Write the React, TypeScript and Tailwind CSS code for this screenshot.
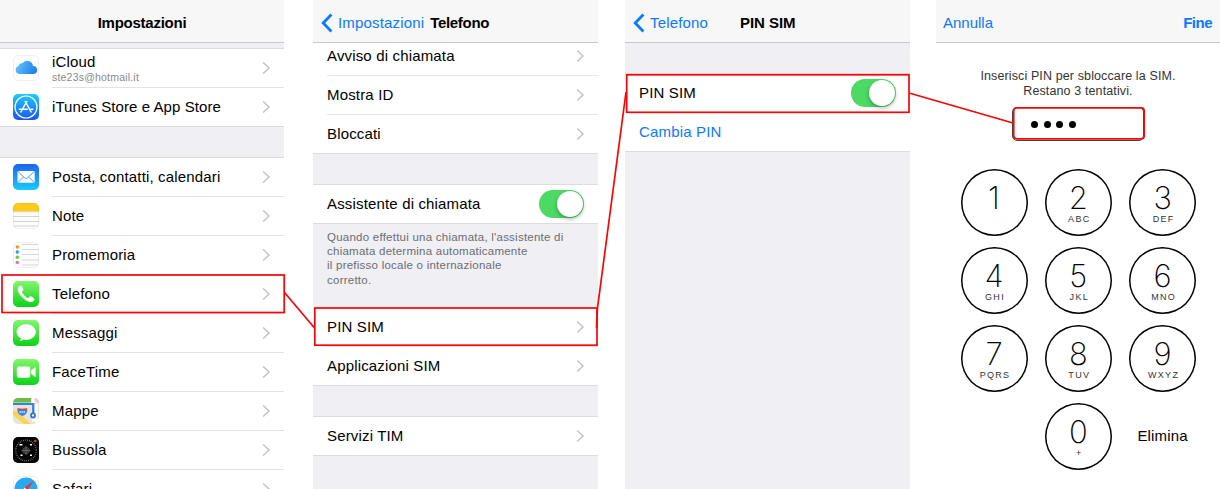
import type { ReactNode } from "react";

function Chevron() {
  return (
    <svg width="9" height="14" viewBox="0 0 9 14" fill="none" className="mr-[13px] shrink-0">
      <path d="M1.2 1.5 7 7l-5.8 5.5" stroke="#c3c3c8" strokeWidth="1.5" />
    </svg>
  );
}

function BackArrow() {
  return (
    <svg width="12" height="20" viewBox="0 0 12 20" fill="none" className="shrink-0">
      <path d="M10.4 1.6 2.2 10l8.2 8.4" stroke="#0a7aff" strokeWidth="2.8" />
    </svg>
  );
}

function Toggle() {
  return (
    <div className="mr-[14px] flex h-[28px] w-[45px] shrink-0 justify-end rounded-full bg-[#4cd964] p-[1px]">
      <div className="size-[26px] rounded-full bg-white shadow-[0_2px_4px_rgba(0,0,0,0.3)]" />
    </div>
  );
}

function AppIcon({ children }: { children: ReactNode }) {
  return (
    <svg width="26" height="26" viewBox="0 0 26 26" className="shrink-0 overflow-hidden rounded-[5px]">
      {children}
    </svg>
  );
}

const green = (id: string) => (
  <>
    <linearGradient id={id} x2="0" y2="1">
      <stop stopColor="#84f66d" />
      <stop offset="1" stopColor="#0bd318" />
    </linearGradient>
    <rect width="26" height="26" fill={`url(#${id})`} />
  </>
);

const icons: Record<string, ReactNode> = {
  icloud: (
    <>
      <linearGradient id="cloud" x2="1" y2="0.3">
        <stop stopColor="#68c7fb" />
        <stop offset="1" stopColor="#2684ee" />
      </linearGradient>
      <rect x=".5" y=".5" width="25" height="25" rx="4.5" fill="#fff" stroke="#eee" />
      <path d="M6.500 19a4 4 0 0 1-.7-7.900A3.200 3.200 0 0 1 9.400 8.300 5.800 5.800 0 0 1 20 11 4 4 0 0 1 20.200 19Z" fill="url(#cloud)" />
    </>
  ),
  store: (
    <>
      <linearGradient id="store" x2="0" y2="1">
        <stop stopColor="#1dcdfb" />
        <stop offset="1" stopColor="#1b55f2" />
      </linearGradient>
      <rect width="26" height="26" fill="url(#store)" />
      <g fill="none" stroke="#fff">
        <circle cx="13" cy="13" r="11" strokeWidth="1.200" />
        <path d="m7.600 18.500 6.400-11.500M12 7l6.400 11.500M5.800 15.200h9M17.600 15.200h2.700" strokeWidth="1.500" />
      </g>
    </>
  ),
  mail: (
    <>
      <linearGradient id="mail" x2="0" y2="1">
        <stop stopColor="#1d62f0" />
        <stop offset="1" stopColor="#1acbfc" />
      </linearGradient>
      <rect width="26" height="26" fill="url(#mail)" />
      <rect x="4.500" y="7" width="17.200" height="11.800" rx="1" fill="#fff" />
      <path d="m5 7.500 6.700 6.400q1.400 1.300 2.800 0l6.700-6.400M5 18.400l5.700-5.500M21.200 18.400l-5.700-5.500" fill="none" stroke="#3499f8" strokeWidth=".9" />
    </>
  ),
  notes: (
    <>
      <rect width="26" height="26" fill="#fcfcfb" />
      <rect width="26" height="8.500" fill="#fdcb1d" />
      <path d="M0 8.700h26" stroke="#d8c9a0" strokeWidth=".6" />
      <path d="M0 13.500h26M0 18.500h26M0 23h26" stroke="#d4d4d4" />
      <rect x=".5" y=".5" width="25" height="25" rx="4.500" fill="none" stroke="#000" strokeOpacity=".05" />
    </>
  ),
  reminders: (
    <>
      <rect x=".5" y=".5" width="25" height="25" rx="4.500" fill="#fdfdfd" stroke="#eee" />
      <path d="M9 2.500h17M9 7.500h17M9 12.500h17M9 18h17M9 23h17" stroke="#d7d7d7" />
      <circle cx="4.300" cy="5" r="1.700" fill="#ff9500" />
      <circle cx="4.300" cy="10" r="1.700" fill="#1e9ff5" />
      <circle cx="4.300" cy="15.300" r="1.700" fill="#5fd33a" />
      <circle cx="4.300" cy="20.400" r="1.700" fill="#c86edf" />
    </>
  ),
  phone: (
    <>
      {green("phone")}
      <path
        d="M5 6.800C5.600 5.500 6.800 4.500 7.800 4.400c.8 0 2.700 3.200 2.700 4.100 0 1-1.600 1.500-1.500 2.400.2 1.500 4.300 5.700 6 6 .9.100 1.500-1.600 2.500-1.600.9 0 4 2.100 4 3 0 1-1.300 2.400-2.600 2.800C14.500 22.500 3 12.500 5 6.800Z"
        fill="#fff"
      />
    </>
  ),
  messages: (
    <>
      {green("messages")}
      <path d="M13.200 4.200c5.400 0 9.600 3.500 9.600 7.900s-4.200 7.900-9.600 7.900c-1 0-2-.1-2.900-.4-.8.700-2 1.400-3.600 1.400.8-.7 1.200-1.600 1.200-2.500-2.600-1.400-4.300-3.700-4.300-6.400 0-4.400 4.200-7.900 9.600-7.900Z" fill="#fff" />
    </>
  ),
  facetime: (
    <>
      {green("facetime")}
      <rect x="3.800" y="7.500" width="13.400" height="11.200" rx="2" fill="#fff" />
      <path d="m17.800 11.600 4.800-3.700v10.400l-4.800-3.700Z" fill="#fff" />
    </>
  ),
  maps: (
    <>
      <rect width="26" height="26" fill="#e9e4d8" />
      <path d="M0 0h18v4.500H0Z" fill="#6cbc45" />
      <path d="M22 0h4v4.500q-4-1-4-4.500Z" fill="#f6b8c7" />
      <path d="M0 12.500 5 14l13 12H11L0 17Z" fill="#fbd44b" />
      <path d="M23.500 6v20M19 22h7M20 0v5" stroke="#fff" strokeWidth="2.500" fill="none" />
      <path d="M0 6h20.200v9" stroke="#2e83f2" strokeWidth="2.200" fill="none" />
      <circle cx="20" cy="17.400" r="2" fill="#fff" stroke="#2e72d8" strokeWidth="1.700" />
      <path d="M4.300 10.200q5 1 10 0 1.400 6-5 8.200-6.400-2.200-5-8.200Z" fill="#3a82dc" stroke="#dbe7f4" strokeWidth=".6" />
      <path d="M4.700 10.300q4.600.9 9.200 0l.2 1.700H4.500Z" fill="#d8464f" />
      <path d="M6.300 14h6" stroke="#dbe7f4" strokeWidth="1.600" strokeDasharray="1.500 .6" />
    </>
  ),
  compass: (
    <>
      <rect width="26" height="26" fill="#050505" />
      <circle cx="13" cy="13.500" r="10.300" fill="none" stroke="#aaa" strokeWidth="1.300" strokeDasharray=".6 1.300" />
      <circle cx="13" cy="13.500" r="3.300" fill="#333" stroke="#555" strokeWidth=".6" />
      <path d="M13 9v9M8.500 13.500h9" stroke="#777" strokeWidth=".7" />
      <path d="M6.500 7.800h3M17 7.800h2M7.500 18.300h2M17 18.300h2" stroke="#fff" strokeWidth="1.500" />
      <circle cx="22.300" cy="4" r="1.300" fill="#e8352e" />
    </>
  ),
  safari: (
    <>
      <rect x=".5" y=".5" width="25" height="25" rx="4.500" fill="#fff" stroke="#eee" />
      <circle cx="13" cy="13" r="11.500" fill="#27aaf2" />
      <path d="m21.200 4.500-6.900 9.600-2.700-2.500Z" fill="#f32f31" />
      <path d="m4.800 21.500 6.800-9.900 2.700 2.500Z" fill="#fff" />
    </>
  ),
};

function NavBar({ children, className = "" }: { children?: ReactNode; className?: string }) {
  return (
    <header className={`flex h-[43px] shrink-0 items-center border-b border-[#c9c9cb] bg-[#f7f7f7] pt-[4px] ${className}`}>
      {children}
    </header>
  );
}

function IconRow({ icon, label, detail, last }: { icon: string; label: string; detail?: string; last?: boolean }) {
  return (
    <div className={`flex h-[39px] shrink-0 bg-white pl-[13px] ${last ? "border-b border-[#dcdbe0] tracking-[0.08px]" : ""}`}>
      <div className="pt-[6px]">
        <AppIcon>{icons[icon]}</AppIcon>
      </div>
      <div className={`ml-[13px] flex flex-1 items-center justify-between ${last ? "" : "border-b border-[#e3e3e5]"}`}>
        <div className={detail ? "pt-px" : ""}>
          <div className={detail ? "leading-[16px]" : "pt-px"}>{label}</div>
          {detail && <div className="text-[10.5px] leading-[14px] tracking-[0.2px] text-[#8a8a8a]">{detail}</div>}
        </div>
        <Chevron />
      </div>
    </div>
  );
}

function Row({ label, last, toggle, link, className = "h-[39px]" }: { label: string; last?: boolean; toggle?: boolean; link?: boolean; className?: string }) {
  return (
    <div className={`flex shrink-0 flex-col justify-end bg-white ${last ? "border-b border-[#dcdbe0]" : "pl-[14px]"} ${className}`}>
      <div className={`flex h-[38px] shrink-0 items-center justify-between ${last ? "pl-[14px]" : "box-content border-b border-[#e8e8ea]"}`}>
        <span className={link ? "text-[#0a7aff]" : ""}>{label}</span>
        {toggle ? <Toggle /> : link ? null : <Chevron />}
      </div>
    </div>
  );
}

function Gap({ className = "h-[31px]" }: { className?: string }) {
  return <div className={`shrink-0 border-b border-[#dcdbe0] ${className}`} />;
}

function Key({ digit, letters }: { digit: string; letters: string }) {
  return (
    <div className="flex size-[67px] flex-col items-center rounded-full pt-[11px] shadow-[inset_0_0_0_1.5px_#000]">
      <span className="font-['Inter'] text-[31px] leading-[35px] font-extralight tracking-normal">{digit}</span>
      <span className="pl-[2px] text-[9px] leading-[9px] tracking-[1.3px] text-[#333]">{letters}</span>
    </div>
  );
}

const keys = [
  ["1", ""],
  ["2", "ABC"],
  ["3", "DEF"],
  ["4", "GHI"],
  ["5", "JKL"],
  ["6", "MNO"],
  ["7", "PQRS"],
  ["8", "TUV"],
  ["9", "WXYZ"],
];

export default function App() {
  return (
    <main className="relative flex h-[489px] w-[1220px] overflow-hidden bg-white font-['Liberation_Sans',Arial,sans-serif] text-[15px] tracking-[0.16px] whitespace-nowrap text-black">
      <section className="flex w-[284px] shrink-0 flex-col overflow-hidden bg-[#efeff4]">
        <NavBar className="justify-center font-bold tracking-[-0.25px]">Impostazioni</NavBar>
        <Gap className="h-[6px]" />
        <IconRow icon="icloud" label="iCloud" detail="ste23s@hotmail.it" />
        <IconRow icon="store" label="iTunes Store e App Store" last />
        <Gap />
        <IconRow icon="mail" label="Posta, contatti, calendari" />
        <IconRow icon="notes" label="Note" />
        <IconRow icon="reminders" label="Promemoria" />
        <IconRow icon="phone" label="Telefono" />
        <IconRow icon="messages" label="Messaggi" />
        <IconRow icon="facetime" label="FaceTime" />
        <IconRow icon="maps" label="Mappe" />
        <IconRow icon="compass" label="Bussola" />
        <IconRow icon="safari" label="Safari" />
      </section>

      <section className="ml-[29px] flex w-[285px] shrink-0 flex-col overflow-hidden bg-[#efeff4]">
        <NavBar className="pl-[8px]">
          <BackArrow />
          <span className="ml-[5px] text-[#0a7aff]">Impostazioni</span>
          <span className="ml-[6px] font-bold tracking-[-0.3px]">Telefono</span>
        </NavBar>
        <Row label="Avviso di chiamata" className="h-[33px]" />
        <Row label="Mostra ID" />
        <Row label="Bloccati" last />
        <Gap />
        <Row label="Assistente di chiamata" toggle last />
        <p className="h-[84px] shrink-0 pt-[6px] pl-[14px] text-[11.5px] leading-[14.200px] tracking-[0.24px] text-[#6d6d72]">
          Quando effettui una chiamata, l'assistente di
          <br />
          chiamata determina automaticamente
          <br />
          il prefisso locale o internazionale
          <br />
          corretto.
        </p>
        <Row label="PIN SIM" />
        <Row label="Applicazioni SIM" last />
        <Gap />
        <Row label="Servizi TIM" last />
      </section>

      <section className="ml-[27px] flex w-[285px] shrink-0 flex-col bg-[#efeff4]">
        <NavBar className="pl-[8px]">
          <BackArrow />
          <span className="ml-[5px] text-[#0a7aff]">Telefono</span>
          <span className="ml-[32px] font-bold tracking-[-0.05px]">PIN SIM</span>
        </NavBar>
        <Gap className="h-[31px]" />
        <Row label="PIN SIM" toggle />
        <Row label="Cambia PIN" link last />
      </section>

      <section className="ml-[26px] flex w-[284px] shrink-0 flex-col bg-white">
        <NavBar className="justify-between pr-[8px] pl-[7px] text-[#0a7aff]">
          <span className="tracking-normal">Annulla</span>
          <span className="font-bold tracking-[-0.5px]">Fine</span>
        </NavBar>
        <p className="mt-[26px] text-center text-[12.500px] leading-[14.500px] tracking-[0.12px] text-[#333]">
          Inserisci PIN per sbloccare la SIM.
          <br />
          Restano 3 tentativi.
        </p>
        <div className="mt-[9px] ml-[76px] flex h-[34px] w-[132px] items-center gap-[5.5px] rounded-[5px] border border-[#444] pl-[18px]">
          {[0, 1, 2, 3].map((n) => (
            <i key={n} className="size-[7px] rounded-full bg-black" />
          ))}
        </div>
        <div className="mt-[28px] ml-[24.5px] grid grid-cols-[67px_67px_67px] gap-x-[17.300px] gap-y-[11px]">
          {keys.map(([digit, letters]) => (
            <Key key={digit} digit={digit} letters={letters} />
          ))}
          <span />
          <Key digit="0" letters="+" />
          <span className="flex items-center justify-center">Elimina</span>
        </div>
      </section>

      <svg className="pointer-events-none absolute inset-0" width="1220" height="489" fill="none" stroke="#fa0505" strokeWidth="1.700">
        <rect x="2" y="275" width="282.200" height="37.500" />
        <rect x="314.800" y="308" width="282.200" height="37.200" />
        <rect x="626.700" y="74.800" width="282.300" height="37.500" />
        <rect x="1013.700" y="107.800" width="130.500" height="31" rx="3" />
        <path d="m284.500 292.500 30 35.500M596.500 328l1-20 28.500-216M909 93l104 30" />
      </svg>
    </main>
  );
}
